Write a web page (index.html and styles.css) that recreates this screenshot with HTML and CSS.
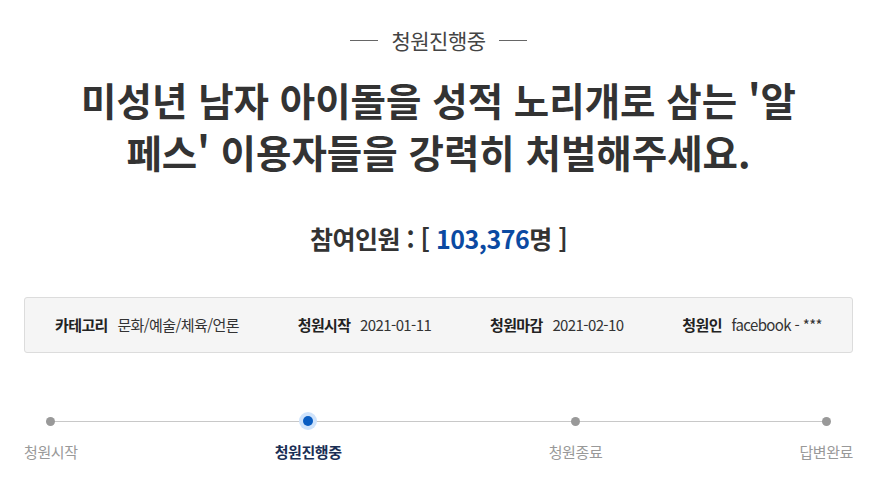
FILE: index.html
```html
<!DOCTYPE html>
<html lang="ko">
  <head>
    <meta charset="UTF-8" />
    <meta name="viewport" content="width=device-width, initial-scale=1.0" />
    <title>청원진행중</title>
    <link rel="stylesheet" href="styles.css">
  </head>
  <body>
    <div class="status">
      <span class="dash"></span>
      <span>청원진행중</span>
      <span class="dash"></span>
    </div>

    <h1 class="title">미성년 남자 아이돌을 성적 노리개로 삼는 '알<br>페스' 이용자들을 강력히 처벌해주세요.</h1>

    <p class="count">참여인원 : [ <span class="num">103,376</span>명 ]</p>

    <ul class="info">
      <li><strong>카테고리</strong> 문화/예술/체육/언론</li>
      <li><strong>청원시작</strong> 2021-01-11</li>
      <li><strong>청원마감</strong> 2021-02-10</li>
      <li><strong>청원인</strong> facebook - ***</li>
    </ul>

    <ol class="steps">
      <li><span class="dot"></span><span class="label">청원시작</span></li>
      <li class="on"><span class="dot"></span><span class="label">청원진행중</span></li>
      <li><span class="dot"></span><span class="label">청원종료</span></li>
      <li><span class="dot"></span><span class="label">답변완료</span></li>
    </ol>
  </body>
</html>
```

FILE: styles.css
```css
body {
  margin: 0;
  font-family: "Noto Sans CJK KR", "Noto Sans", sans-serif;
  color: #333;
  background: #fff;
}
.status {
  margin-top: 25px;
  display: flex;
  justify-content: center;
  align-items: center;
  gap: 13px;
  font-size: 21px;
  line-height: 30px;
  letter-spacing: -0.5px;
  color: #444;
}
.dash {
  width: 28px;
  height: 1px;
  background: #666;
}
.title {
  margin: 18px 0 0;
  text-align: center;
  font-size: 38.5px;
  line-height: 52px;
  font-weight: bold;
  color: #333;
}
.count {
  margin: 44px 0 0;
  text-align: center;
  font-size: 25px;
  line-height: 34px;
  font-weight: bold;
  letter-spacing: -0.5px;
}
.num {
  color: #0b4aa2;
}
.info {
  list-style: none;
  margin: 42px 24px 0;
  padding: 16px 30px 17px;
  display: flex;
  justify-content: space-between;
  background: #f5f5f5;
  border: 1px solid #dcdcdc;
  border-radius: 3px;
  font-size: 15px;
  line-height: 21px;
  letter-spacing: -0.6px;
  color: #333;
}
.info strong {
  margin-right: 6px;
  color: #222;
}
.steps {
  list-style: none;
  position: relative;
  margin: 59px 24px 0;
  padding: 0;
  display: flex;
  justify-content: space-between;
}
.steps::before {
  content: "";
  position: absolute;
  left: 26px;
  right: 27px;
  top: 9px;
  height: 1px;
  background: #c8c8c8;
}
.steps li {
  position: relative;
  display: flex;
  flex-direction: column;
  align-items: center;
  gap: 11px;
}
.steps li.on {
  margin-right: 10px;
}
.dot {
  width: 18px;
  height: 18px;
  display: flex;
  align-items: center;
  justify-content: center;
}
.dot::after {
  content: "";
  width: 9px;
  height: 9px;
  border-radius: 50%;
  background: #999;
}
.on .dot {
  border-radius: 50%;
  background: #cfe3fb;
}
.on .dot::after {
  width: 10px;
  height: 10px;
  background: #0a5dc2;
}
.label {
  font-size: 15px;
  line-height: 21px;
  color: #999;
  letter-spacing: -0.4px;
}
.on .label {
  color: #1b2f55;
  font-weight: bold;
}
```
